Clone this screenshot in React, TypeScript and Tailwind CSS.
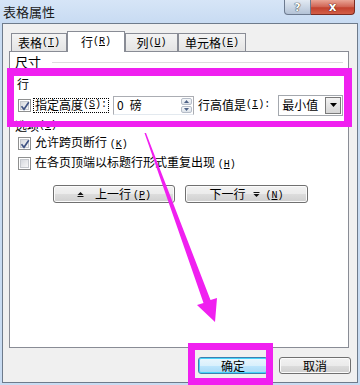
import React from "react";

const Mn = ({ k, colon }: { k: string; colon?: boolean }) => (
  <span className="font-['Liberation_Mono',monospace] text-[10px]">
    (<span className="underline">{k}</span>){colon ? ":" : ""}
  </span>
);

const Check = ({ on }: { on?: boolean }) => (
  <span className="relative w-[13px] h-[13px] shrink-0 border border-[#8e8f8f] bg-white p-[1px]">
    <span className="block w-full h-full border border-[#c4c7cc] bg-gradient-to-br from-[#d6d9de] to-[#f7f7f7]" />
    {on && (
      <svg className="absolute left-[1px] top-[1px]" width="10" height="10" viewBox="0 0 10 10">
        <path d="M1.5 5.2 L4 8.3 L8.8 1.2" fill="none" stroke="#3f5383" strokeWidth="1.6" />
      </svg>
    )}
  </span>
);

const UpMark = () => (
  <svg width="7" height="7" viewBox="0 0 7 7">
    <polygon points="0.5,4 3.5,1 6.5,4" fill="#111" />
    <rect x="0.5" y="5" width="6" height="1" fill="#111" />
  </svg>
);

const DownMark = () => (
  <svg width="7" height="7" viewBox="0 0 7 7">
    <rect x="0.5" y="1" width="6" height="1" fill="#111" />
    <polygon points="0.5,3 3.5,6 6.5,3" fill="#111" />
  </svg>
);

const btn =
  "rounded-[3px] border border-[#707070] bg-[linear-gradient(#f2f2f2,#ebebeb_50%,#dddddd_50%,#cfcfcf)] shadow-[inset_0_0_0_1px_#fbfbfb] flex items-center justify-center";

const Tab = ({ label, k, w, active }: { label: string; k: string; w: string; active?: boolean }) => (
  <div
    className={
      active
        ? `relative z-10 -mb-px h-[21px] ${w} border border-b-0 border-[#898c95] bg-white flex items-center justify-center`
        : `h-[18px] ${w} border border-b-0 border-[#898c95] bg-gradient-to-b from-[#f4f4f4] to-[#e4e4e4] flex items-center justify-center`
    }
  >
    <span>{label}</span>
    <Mn k={k} />
  </div>
);

export default function App() {
  return (
    <div className="relative w-[360px] h-[385px] overflow-hidden bg-[#c9dcf2] font-['Noto_Sans_CJK_SC',sans-serif] text-[12px] leading-[14px] text-black">
      {/* title bar */}
      <div className="h-[23px] flex items-start justify-between bg-gradient-to-b from-[#d6e5f7] to-[#c8dbf2]">
        <div className="pl-[3px] pt-[4px] text-[13px] leading-[16px] text-[#1a1a1a]">表格属性</div>
        <div className="flex mr-[5px]">
          <div className="w-[27px] h-[15px] border border-t-0 border-[#6c7a8f] rounded-bl-[4px] bg-gradient-to-b from-[#e2eaf3] to-[#b3c2d6] flex items-center justify-center text-[11px] leading-[11px] font-bold text-white font-['DejaVu_Sans',sans-serif] [text-shadow:0_0_1px_#222,0_0_1px_#222]">
            ?
          </div>
          <div className="w-[44px] h-[15px] border border-t-0 border-l-0 border-[#7b2b21] rounded-br-[4px] bg-[linear-gradient(#e9a596,#d06352_50%,#c2412e_55%,#d35e47)] flex items-center justify-center text-[12px] leading-[12px] font-bold text-white font-['DejaVu_Sans',sans-serif] [text-shadow:0_0_1px_#3a0a05,0_0_1px_#3a0a05]">
            x
          </div>
        </div>
      </div>

      {/* client area */}
      <div className="ml-[2px] w-[356px] h-[360px] border border-[#6e7b8b] bg-[#f0f0f0] flex flex-col">
        <div className="pl-[6px] pt-[7px]">
          <div className="flex items-end h-[20px] pl-[2px]">
            <Tab label="表格" k="T" w="w-[56px]" />
            <Tab label="行" k="R" w="w-[58px]" active />
            <Tab label="列" k="U" w="w-[53px]" />
            <Tab label="单元格" k="E" w="w-[68px]" />
          </div>

          <div className="w-[340px] h-[297px] border border-[#898c95] bg-white flex flex-col">
            <div className="mt-[3px] h-[14px] pl-[5px] flex items-center">
              <span className="text-[13px]">尺寸</span>
              <span className="flex-1 h-px bg-[#dcdcdc] ml-[11px] mr-[5px]" />
            </div>

            <div className="mt-[8px] h-[14px] pl-[7px] flex items-center">行</div>

            <div className="mt-[4px] h-[20px] pl-[8px] flex items-center">
              <Check on />
              <div className="ml-[2px] h-[15px] px-[1px] border border-dotted border-black flex items-center">
                <span>指定高度</span>
                <Mn k="S" colon />
              </div>
              <div className="ml-[4px] w-[81px] h-[19px] border border-[#abadb3] border-b-[#e3e9ef] bg-white flex">
                <span className="flex-1 pl-[3px] flex items-center">
                  <span>0</span>
                  <span className="ml-[6px]">磅</span>
                </span>
                <div className="w-[13px] flex flex-col gap-px p-px">
                  <div className="flex-1 rounded-[2px] border border-[#b6bdc8] bg-gradient-to-b from-[#f6f8fa] to-[#dde3ea] flex items-center justify-center">
                    <svg width="5" height="3" viewBox="0 0 5 3">
                      <polygon points="0,3 2.5,0 5,3" fill="#4d6185" />
                    </svg>
                  </div>
                  <div className="flex-1 rounded-[2px] border border-[#b6bdc8] bg-gradient-to-b from-[#f6f8fa] to-[#dde3ea] flex items-center justify-center">
                    <svg width="5" height="3" viewBox="0 0 5 3">
                      <polygon points="0,0 2.5,3 5,0" fill="#4d6185" />
                    </svg>
                  </div>
                </div>
              </div>
              <div className="ml-[4px] flex items-center">
                <span>行高值是</span>
                <Mn k="I" colon />
              </div>
              <div className="ml-[8px] w-[65px] h-[21px] border border-[#a4a8ae] bg-white flex items-center">
                <span className="flex-1 pl-[3px]">最小值</span>
                <div className="w-[16px] h-[17px] mr-px border border-[#7a7a7a] bg-gradient-to-b from-[#f3f3f3] to-[#d6d6d6] flex items-center justify-center">
                  <svg width="7" height="4" viewBox="0 0 7 4">
                    <polygon points="0,0 3.5,4 7,0" fill="#000" />
                  </svg>
                </div>
              </div>
            </div>

            <div className="mt-[4px] h-[14px] pl-[5px] flex items-center">
              <span>选项</span>
              <Mn k="O" />
              <span className="flex-1 h-px bg-[#dcdcdc] ml-[6px] mr-[5px]" />
            </div>

            <div className="mt-[3px] h-[14px] pl-[8px] flex items-center gap-[4px]">
              <Check on />
              <span>
                允许跨页断行 <Mn k="K" />
              </span>
            </div>

            <div className="mt-[6px] h-[14px] pl-[8px] flex items-center gap-[4px]">
              <Check />
              <span>
                在各页顶端以标题行形式重复出现 <Mn k="H" />
              </span>
            </div>

            <div className="mt-[15px] pl-[43px] flex gap-[10px]">
              <div className={`${btn} w-[122px] h-[18px]`}>
                <UpMark />
                <span className="ml-[11px]">上一行</span>
                <span className="ml-[2px]">
                  <Mn k="P" />
                </span>
              </div>
              <div className={`${btn} w-[123px] h-[18px]`}>
                <span>下一行</span>
                <span className="ml-[8px] flex">
                  <DownMark />
                </span>
                <span className="ml-[5px]">
                  <Mn k="N" />
                </span>
              </div>
            </div>
          </div>
        </div>

        <div className="mt-[9px] pr-[6px] flex justify-end gap-[11px]">
          <div className="w-[70px] h-[17px] rounded-[3px] border border-[#3c7fb1] bg-[linear-gradient(#eaf6fd,#d9f0fc_50%,#bee6fd_50%,#a7d9f5)] shadow-[inset_0_0_0_1px_#48d4fa] flex items-center justify-center">
            确定
          </div>
          <div className={`${btn} w-[72px] h-[17px]`}>取消</div>
        </div>
      </div>

      {/* annotations */}
      <div className="absolute left-[7px] top-[68px] w-[345px] h-[59px] border-t-[8px] border-b-[6px] border-l-[7px] border-r-[8px] border-[#f020f0] pointer-events-none" />
      <div className="absolute left-[188px] top-[343px] w-[85px] h-[42px] border-[7px] border-[#f020f0] pointer-events-none" />
      <svg className="absolute left-0 top-0 pointer-events-none" width="360" height="385" viewBox="0 0 360 385">
        <polygon
          points="144.5,133 146,133 210.5,300 217,298 215,322 197,305 203.5,303"
          fill="#f020f0"
        />
      </svg>
    </div>
  );
}
